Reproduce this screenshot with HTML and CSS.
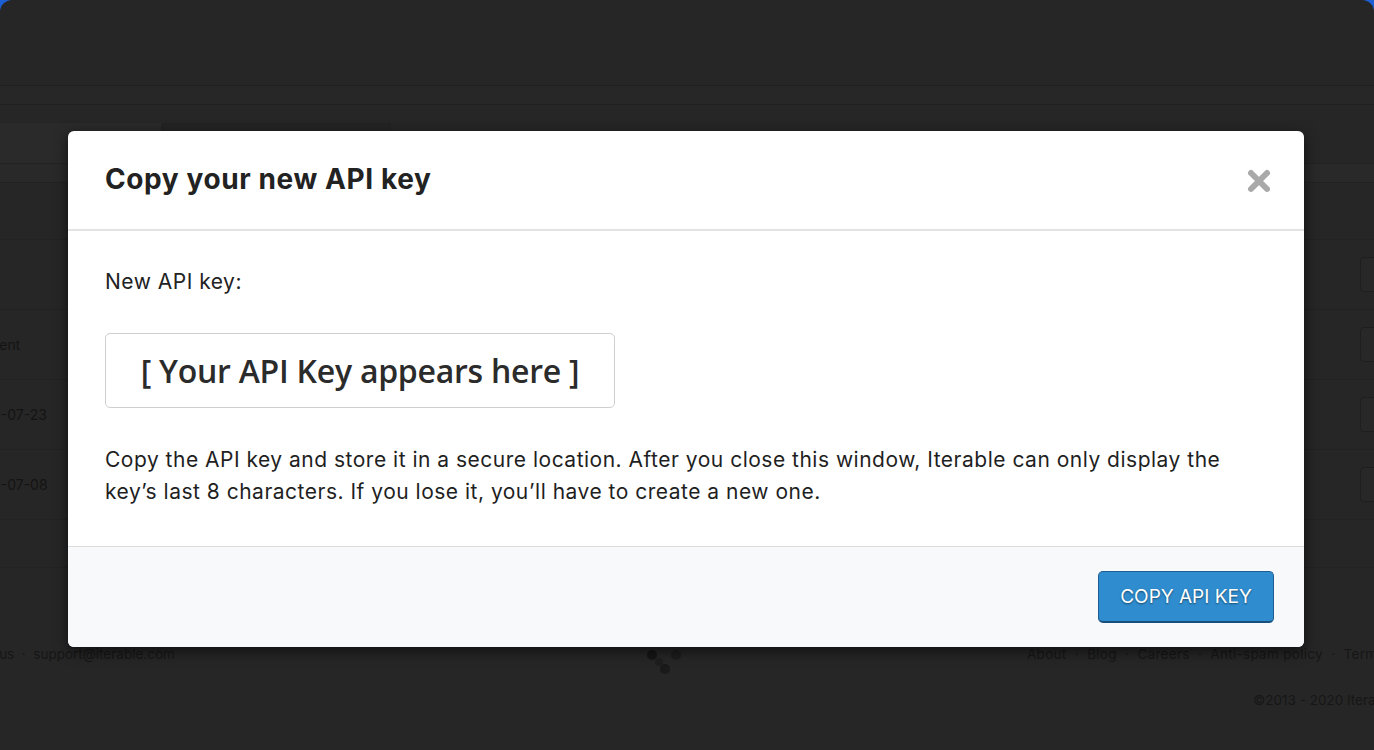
FILE: index.html
```html
<!DOCTYPE html>
<html lang="en">
<head>
    <meta charset="UTF-8">
    <meta name="viewport" content="width=device-width, initial-scale=1.0">
    <title>Copy your new API key</title>
    <link rel="stylesheet" href="styles.css">
</head>
<body>
    <div class="page">
        <div class="topbar"></div>
        <div class="subnav"></div>
        <div class="tabs">
            <div class="tab tab-side"></div>
            <div class="tab tab-active"></div>
        </div>
        <div class="table">
            <div class="row row-head"></div>
            <div class="row row-tall"></div>
            <div class="row"><span class="cell"></span><span class="row-btn"></span></div>
            <div class="row"><span class="cell cell-clip">ment</span><span class="row-btn"></span></div>
            <div class="row"><span class="cell cell-date">2020-07-23</span><span class="row-btn"></span></div>
            <div class="row"><span class="cell cell-date">2020-07-08</span><span class="row-btn"></span></div>
            <div class="row row-end"></div>
        </div>

        <div class="footer">
            <div class="footer-left">Status &nbsp;·&nbsp; support@iterable.com</div>
            <div class="footer-logo">
                <svg width="40" height="30" viewBox="0 0 40 30">
                    <circle cx="7" cy="6" r="5" fill="#161616"/>
                    <circle cx="31" cy="6" r="5" fill="#1d1d1d"/>
                    <circle cx="20" cy="20" r="5" fill="#1a1a1a"/>
                    <circle cx="14" cy="13" r="4" fill="#1e1e1e"/>
                </svg>
            </div>
            <div class="footer-right">
                <div class="footer-links">About &nbsp;·&nbsp; Blog &nbsp;·&nbsp; Careers &nbsp;·&nbsp; Anti-spam policy &nbsp;·&nbsp; Terms</div>
                <div class="copyright">©2013 - 2020 Iterable</div>
            </div>
        </div>

        <div class="modal">
            <div class="modal-header">
                <h2>Copy your new API key</h2>
                <button class="close" type="button" aria-label="Close">
                    <svg width="26" height="26" viewBox="0 0 26 26">
                        <path d="M5 5 L21 21 M21 5 L5 21" stroke="#a9a9a9" stroke-width="6" stroke-linecap="round"/>
                    </svg>
                </button>
            </div>
            <div class="modal-body">
                <p class="label">New API key:</p>
                <div class="key-box">[ Your API Key appears here ]</div>
                <p class="note">Copy the API key and store it in a secure location. After you close this window, Iterable can only display the key’s last 8 characters. If you lose it, you’ll have to create a new one.</p>
            </div>
            <div class="modal-footer">
                <button class="btn-primary" type="button">COPY API KEY</button>
            </div>
        </div>
    </div>
</body>
</html>
```

FILE: styles.css
```css
body {
    margin: 0;
    background-color: #1c5fd4;
    font-family: 'Inter', 'Liberation Sans', sans-serif;
    overflow: hidden;
}

.page {
    position: relative;
    height: 750px;
    background-color: #262626;
    border-radius: 12px 12px 0 0;
    overflow: hidden;
    color: #141414;
}

.topbar {
    height: 85px;
    border-bottom: 1px solid #202020;
}

.subnav {
    height: 18px;
    border-bottom: 1px solid #202020;
    background-color: #272727;
}

.tabs {
    height: 40px;
    margin-top: 18px;
    display: flex;
    border-bottom: 1px solid #222;
}

.tab-side {
    width: 161px;
    background-color: #2a2a2a;
}

.tab-active {
    width: 228px;
    border: 1px solid #222;
    border-bottom: none;
    border-radius: 4px 4px 0 0;
    background-color: #242424;
}

.table {
    font-size: 14px;
}

.row {
    height: 69px;
    border-bottom: 1px solid #222;
    display: flex;
    align-items: center;
    justify-content: space-between;
}

.row-head {
    height: 18px;
    background-color: #292929;
}

.row-tall {
    height: 56px;
}

.row-end {
    height: 47px;
}

.cell-clip {
    margin-left: -13px;
}

.cell-date {
    margin-left: -34px;
}

.row-btn {
    width: 40px;
    height: 33px;
    margin-right: -28px;
    border: 1px solid #1e1e1e;
    border-radius: 4px;
    background-color: #282828;
}

.footer {
    display: flex;
    justify-content: space-between;
    padding-top: 78px;
    font-size: 13.5px;
    color: #161616;
}

.footer-left {
    margin-left: -26px;
}

.footer-logo {
    margin-left: 128px;
    padding-top: 3px;
}

.footer-right {
    width: 347px;
}

.footer-links {
    white-space: nowrap;
    letter-spacing: 0.3px;
}

.copyright {
    margin-top: 30px;
    padding-left: 226px;
    white-space: nowrap;
}

/* modal */

.modal {
    position: absolute;
    left: 68px;
    top: 131px;
    width: 1236px;
    background-color: #fff;
    border-radius: 6px;
    box-shadow: 0 4px 14px rgba(0, 0, 0, 0.6);
    overflow: hidden;
    color: #222;
}

.modal-header {
    box-sizing: border-box;
    height: 100px;
    padding: 0 32px 2px 37px;
    display: flex;
    align-items: center;
    justify-content: space-between;
    border-bottom: 2px solid #e3e3e3;
}

.modal-header h2 {
    margin: 0;
    font-size: 28px;
    font-weight: 700;
    letter-spacing: 0.6px;
    color: #222;
}

.close {
    border: none;
    background: none;
    padding: 0;
    margin-top: 4px;
    cursor: pointer;
    line-height: 0;
}

.modal-body {
    padding: 38px 37px 38px;
    border-bottom: 1px solid #dcdcdc;
}

.label {
    margin: 0;
    font-size: 21px;
    line-height: 26px;
    letter-spacing: 0.5px;
}

.key-box {
    width: 508px;
    height: 73px;
    margin-top: 38px;
    border: 1px solid #cfcfcf;
    border-radius: 5px;
    display: flex;
    align-items: center;
    justify-content: center;
    font-family: 'Open Sans', 'Noto Sans', sans-serif;
    font-weight: 600;
    font-size: 32px;
    letter-spacing: -0.25px;
    color: #2b2b2b;
}

.note {
    margin: 36px 0 0;
    font-size: 21px;
    line-height: 32px;
    letter-spacing: 0.5px;
    color: #1f1f1f;
}

.modal-footer {
    height: 100px;
    padding-right: 30px;
    background-color: #f8f9fb;
    display: flex;
    align-items: center;
    justify-content: flex-end;
}

.btn-primary {
    width: 176px;
    height: 52px;
    border: 1px solid #1d5e92;
    border-bottom: 2px solid #184f7c;
    border-radius: 5px;
    background-color: #2f8dcf;
    color: #fff;
    font-family: 'Inter', 'Liberation Sans', sans-serif;
    font-size: 19px;
    text-shadow: 0 1px 2px rgba(0, 0, 0, 0.5);
    cursor: pointer;
}
```
